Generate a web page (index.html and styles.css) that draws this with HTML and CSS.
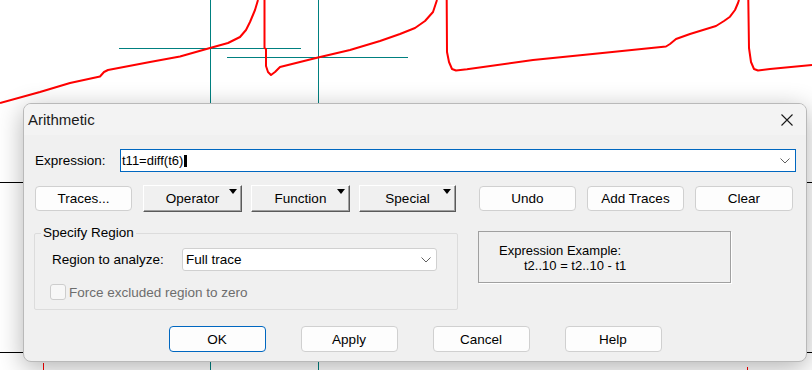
FILE: index.html
```html
<!DOCTYPE html>
<html lang="en">
<head>
    <meta charset="UTF-8">
    <title>Arithmetic</title>
    <link rel="stylesheet" href="styles.css">
</head>
<body>
    <div class="screen">
        <!-- trace window behind the dialog -->
        <svg class="plot" width="812" height="370" viewBox="0 0 812 370">
            <line x1="0" y1="182.5" x2="812" y2="182.5" stroke="#000" stroke-width="1"/>
            <line x1="0" y1="352.5" x2="812" y2="352.5" stroke="#000" stroke-width="1"/>
            <line x1="210.5" y1="0" x2="210.5" y2="370" stroke="#008080" stroke-width="1"/>
            <line x1="318.5" y1="0" x2="318.5" y2="370" stroke="#008080" stroke-width="1"/>
            <line x1="119" y1="48.5" x2="301" y2="48.5" stroke="#008080" stroke-width="1"/>
            <line x1="227" y1="57.5" x2="408" y2="57.5" stroke="#008080" stroke-width="1"/>
            <g fill="none" stroke="#ff0000" stroke-width="2" stroke-linejoin="round">
                <path d="M0,103 L40,92 L70,83 L100,76.5 L104,72 L108,70 L150,62 L180,56.5 L210,48 L228,43 L240,37 L246,30 L250,22 L255,10 L258,0"/>
                <path d="M264.5,0 L264.5,48 L266,49 L266,66 L268,72 L271,75 L275,72 L280,67 L300,62 L318,57.5 L350,50 L380,41 L400,34 L415,28 L425,21 L433,12 L437,0"/>
                <path d="M446.7,0 L447,52 L449,62 L452,69 L456,70.5 L467,69.3 L533,60 L600,53.3 L666,46.5 L670,44 L676,39 L690,34 L716,26 L724,21 L730,16.7 L735,10 L738,3 L739,0"/>
                <path d="M748.3,0 L749,48 L751,62 L754,69 L758,70.5 L770,69 L812,65"/>
            </g>
            <line x1="43.5" y1="363" x2="43.5" y2="370" stroke="#ff0000" stroke-width="1"/>
            <line x1="747.5" y1="367" x2="747.5" y2="370" stroke="#ff0000" stroke-width="1"/>
        </svg>

        <div class="dialog">
            <div class="titlebar">
                <span class="title">Arithmetic</span>
                <svg class="close-icon" width="12" height="12" viewBox="0 0 12 12">
                    <path d="M0.5 0.5 L11.5 11.5 M11.5 0.5 L0.5 11.5" stroke="#1a1a1a" stroke-width="1.1" fill="none"/>
                </svg>
            </div>

            <div class="dialog-body">
                <div class="expr-row">
                    <span class="expr-label">Expression:</span>
                    <div class="combo">
                        <span>t11=diff(t6)</span>
                        <span class="caret"></span>
                        <svg class="chevron" width="10" height="6" viewBox="0 0 10 6">
                            <path d="M0.5 0.5 L5 5 L9.5 0.5" stroke="#606060" stroke-width="1" fill="none"/>
                        </svg>
                    </div>
                </div>

                <div class="button-row">
                    <button class="btn btn-traces">Traces...</button>
                    <button class="btn-classic btn-operator">Operator</button>
                    <button class="btn-classic btn-function">Function</button>
                    <button class="btn-classic btn-special">Special</button>
                    <button class="btn btn-undo">Undo</button>
                    <button class="btn btn-add">Add Traces</button>
                    <button class="btn btn-clear">Clear</button>
                </div>

                <div class="section-row">
                    <fieldset class="region-box">
                        <legend>Specify Region</legend>
                        <div class="region-row">
                            <span class="region-label">Region to analyze:</span>
                            <div class="select">
                                <span>Full trace</span>
                                <svg class="chevron" width="10" height="6" viewBox="0 0 10 6">
                                    <path d="M0.5 0.5 L5 5 L9.5 0.5" stroke="#606060" stroke-width="1" fill="none"/>
                                </svg>
                            </div>
                        </div>
                        <div class="check-row">
                            <span class="checkbox"></span>
                            <span class="check-label">Force excluded region to zero</span>
                        </div>
                    </fieldset>

                    <div class="example-box">
                        <div>Expression Example:</div>
                        <div class="example-line">t2..10 = t2..10 - t1</div>
                    </div>
                </div>

                <div class="footer">
                    <button class="btn btn-footer btn-default">OK</button>
                    <button class="btn btn-footer">Apply</button>
                    <button class="btn btn-footer">Cancel</button>
                    <button class="btn btn-footer">Help</button>
                </div>
            </div>
        </div>
    </div>
</body>
</html>
```

FILE: styles.css
```css
* {
    box-sizing: border-box;
}

body {
    margin: 0;
    font-family: "Liberation Sans", Arial, sans-serif;
    color: #000;
}

.screen {
    position: relative;
    width: 812px;
    height: 370px;
    background-color: #fff;
    overflow: hidden;
}

.plot {
    position: absolute;
    left: 0;
    top: 0;
}

.dialog {
    position: absolute;
    left: 23px;
    top: 103px;
    width: 784px;
    height: 259px;
    background-color: #f0f0f0;
    border: 1px solid #b9b9b9;
    border-radius: 8px;
    box-shadow: 0 6px 26px rgba(0, 0, 0, 0.3);
    overflow: hidden;
}

.titlebar {
    height: 31px;
    background-color: #f3f3f3;
    display: flex;
    align-items: center;
    justify-content: space-between;
    padding: 0 13px 0 4px;
}

.title {
    font-size: 15px;
    color: #1a1a1a;
}

.dialog-body {
    padding: 14px 10px 0 10px;
}

/* expression combo */
.expr-row {
    display: flex;
    align-items: center;
    height: 23px;
}

.expr-label {
    width: 86px;
    padding-left: 1px;
    font-size: 13.5px;
}

.combo {
    flex: 1;
    height: 23px;
    display: flex;
    align-items: center;
    padding: 0 5px 0 1px;
    background-color: #fff;
    border: 1px solid #0067c0;
    font-size: 13px;
}

.caret {
    width: 3px;
    height: 12px;
    margin-left: 1px;
    background-color: #000;
}

.combo .chevron {
    margin-left: auto;
}

/* button row */
.button-row {
    display: flex;
    align-items: center;
    height: 27px;
    margin-top: 13px;
}

.btn {
    height: 25px;
    padding: 0;
    background-color: #fdfdfd;
    border: 1px solid #d0d0d0;
    border-radius: 4px;
    font-family: inherit;
    font-size: 13.5px;
    color: #000;
}

.btn-classic {
    position: relative;
    height: 27px;
    padding: 0;
    background-color: #f0f0f0;
    border: 1px solid;
    border-color: #fff #5a5a5a #5a5a5a #fff;
    box-shadow: inset -1px -1px #a0a0a0;
    font-family: inherit;
    font-size: 13.5px;
    color: #000;
}

.btn-classic::after {
    content: "";
    position: absolute;
    top: 3px;
    right: 4px;
    border-left: 4.5px solid transparent;
    border-right: 4.5px solid transparent;
    border-top: 5px solid #000;
}

.btn-traces { width: 97px; margin-left: 1px; }
.btn-operator { width: 99px; margin-left: 11px; }
.btn-function { width: 99px; margin-left: 9px; }
.btn-special { width: 97px; margin-left: 9px; }
.btn-undo { width: 97px; margin-left: 23px; }
.btn-add { width: 97px; margin-left: 11px; }
.btn-clear { width: 98px; margin-left: 11px; }

/* region group + example */
.section-row {
    display: flex;
    align-items: flex-start;
    margin-top: 13px;
}

.region-box {
    width: 424px;
    margin: 0;
    padding: 0 0 9px 0;
    border: 1px solid #dcdcdc;
    border-radius: 2px;
}

.region-box legend {
    margin-left: 6px;
    padding: 0 2px;
    font-size: 13.5px;
    line-height: 16px;
}

.region-row {
    display: flex;
    align-items: center;
    padding: 7px 20px 0 17px;
}

.region-label {
    width: 130px;
    font-size: 13.5px;
}

.select {
    width: 255px;
    height: 23px;
    display: flex;
    align-items: center;
    justify-content: space-between;
    padding: 0 5px 0 3px;
    background-color: #fff;
    border: 1px solid #d0d0d0;
    border-radius: 3px;
    font-size: 13.5px;
}

.check-row {
    display: flex;
    align-items: center;
    margin-top: 13px;
    padding-left: 15px;
}

.checkbox {
    width: 16px;
    height: 16px;
    margin-right: 3px;
    background-color: #f7f7f7;
    border: 1px solid #cdcdcd;
    border-radius: 3px;
}

.check-label {
    font-size: 13.5px;
    color: #6d6d6d;
}

.example-box {
    width: 253px;
    height: 52px;
    margin: 6px 0 0 20px;
    padding: 11px 0 0 20px;
    border: 1px solid #a0a0a0;
    box-shadow: 1px 1px 0 #fff;
    font-size: 13px;
    line-height: 15px;
}

.example-line {
    padding-left: 25px;
}

/* footer */
.footer {
    display: flex;
    justify-content: center;
    gap: 35px;
    margin-top: 16px;
}

.btn-footer {
    width: 97px;
    height: 26px;
}

.btn-default {
    border-color: #0067c0;
}
```
